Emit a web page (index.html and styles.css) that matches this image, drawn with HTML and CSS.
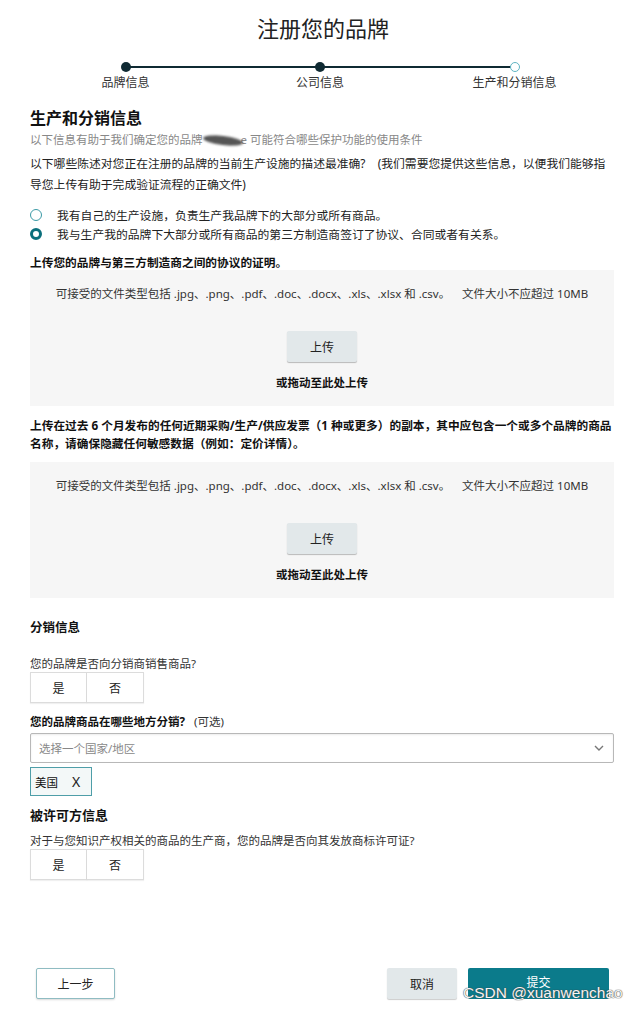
FILE: index.html
```html
<!DOCTYPE html>
<html lang="zh-CN">
<head>
  <meta charset="UTF-8" />
  <meta name="viewport" content="width=device-width, initial-scale=1.0"/>
  <title>注册您的品牌</title>
  <link rel="stylesheet" href="styles.css">
</head>
<body>
  <div class="page">
    <h1 class="title">注册您的品牌</h1>

    <div class="stepper">
      <div class="step done"><span class="dot"></span><span class="step-label">品牌信息</span></div>
      <div class="step done"><span class="dot"></span><span class="step-label">公司信息</span></div>
      <div class="step current"><span class="dot"></span><span class="step-label">生产和分销信息</span></div>
    </div>

    <div class="content">
      <h2 class="section-title">生产和分销信息</h2>
      <p class="subtitle">以下信息有助于我们确定您的品牌<span class="redact"></span>e 可能符合哪些保护功能的使用条件</p>

      <p class="question">以下哪些陈述对您正在注册的品牌的当前生产设施的描述最准确?&nbsp;&nbsp;&nbsp; (我们需要您提供这些信息，以便我们能够指导您上传有助于完成验证流程的正确文件)</p>

      <div class="radios">
        <label class="radio"><span class="circle"></span>我有自己的生产设施，负责生产我品牌下的大部分或所有商品。</label>
        <label class="radio checked"><span class="circle"></span>我与生产我的品牌下大部分或所有商品的第三方制造商签订了协议、合同或者有关系。</label>
      </div>

      <p class="field-label first">上传您的品牌与第三方制造商之间的协议的证明。</p>
      <div class="upload">
        <p class="upload-note">可接受的文件类型包括 .jpg、.png、.pdf、.doc、.docx、.xls、.xlsx 和 .csv。&nbsp;&nbsp;&nbsp; 文件大小不应超过 10MB</p>
        <button class="upload-btn">上传</button>
        <p class="drop">或拖动至此处上传</p>
      </div>

      <p class="field-label second">上传在过去 6 个月发布的任何近期采购/生产/供应发票（1 种或更多）的副本，其中应包含一个或多个品牌的商品名称，请确保隐藏任何敏感数据（例如：定价详情）。</p>
      <div class="upload">
        <p class="upload-note">可接受的文件类型包括 .jpg、.png、.pdf、.doc、.docx、.xls、.xlsx 和 .csv。&nbsp;&nbsp;&nbsp; 文件大小不应超过 10MB</p>
        <button class="upload-btn">上传</button>
        <p class="drop">或拖动至此处上传</p>
      </div>

      <h3 class="group-title dist">分销信息</h3>
      <p class="ask dist-ask">您的品牌是否向分销商销售商品?</p>
      <div class="yesno">
        <button>是</button>
        <button>否</button>
      </div>

      <p class="ask where"><b>您的品牌商品在哪些地方分销?</b>&nbsp;&nbsp; (可选)</p>
      <div class="select">
        <span>选择一个国家/地区</span>
        <svg class="chevron" width="10" height="6" viewBox="0 0 10 6"><path d="M1 1l4 4 4-4" fill="none" stroke="#777" stroke-width="1.4"/></svg>
      </div>
      <div class="chips">
        <span class="chip">美国 <span class="chip-x">X</span></span>
      </div>

      <h3 class="group-title licence">被许可方信息</h3>
      <p class="ask lic-ask">对于与您知识产权相关的商品的生产商，您的品牌是否向其发放商标许可证?</p>
      <div class="yesno">
        <button>是</button>
        <button>否</button>
      </div>
    </div>

    <div class="footer">
      <button class="btn-back">上一步</button>
      <div class="footer-right">
        <button class="btn-cancel">取消</button>
        <button class="btn-submit">提交</button>
      </div>
    </div>

    <div class="watermark">CSDN @xuanwenchao</div>
  </div>
</body>
</html>
```

FILE: styles.css
```css
body {
  margin: 0;
  font-family: "Noto Sans", "Noto Sans CJK SC", sans-serif;
  font-size: 12px;
  color: #111;
  background-color: #fff;
}

p {
  margin: 0;
}

button {
  font-family: inherit;
  cursor: pointer;
}

.page {
  position: relative;
  width: 640px;
  height: 1010px;
}

.title {
  margin: 0;
  padding: 14px 0 0 6px;
  text-align: center;
  font-size: 22px;
  font-weight: 400;
  line-height: 28px;
  color: #222;
}

/* progress steps */
.stepper {
  position: relative;
  width: 389px;
  margin: 20px auto 0;
  display: flex;
  justify-content: space-between;
}

.stepper::before {
  content: "";
  position: absolute;
  left: 0;
  right: 0;
  top: 4px;
  height: 2px;
  background-color: #0f2a33;
}

.step {
  width: 0;
  display: flex;
  flex-direction: column;
  align-items: center;
}

.dot {
  position: relative;
  flex: none;
  width: 10px;
  height: 10px;
  border-radius: 50%;
  background-color: #0f2a33;
  box-sizing: border-box;
}

.step.current .dot {
  background-color: #fff;
  border: 1.5px solid #5fb4c2;
}

.step-label {
  margin-top: 4px;
  white-space: nowrap;
  font-size: 12px;
  line-height: 14px;
  color: #333;
}

.content {
  padding: 0 26px 0 30px;
}

.section-title {
  margin: 17px 0 0;
  font-size: 16px;
  line-height: 22px;
  font-weight: 700;
  color: #111;
}

.subtitle {
  margin-top: 3px;
  font-size: 11.5px;
  line-height: 16px;
  color: #888;
}

.redact {
  display: inline-block;
  width: 40px;
  height: 9px;
  margin: 0 -2px 0 0;
  vertical-align: middle;
  border-radius: 50%;
  background-color: #555;
  transform: rotate(7deg);
  filter: blur(0.8px);
}

.question {
  margin-top: 5px;
  font-size: 11.8px;
  line-height: 21px;
  color: #222;
}

.radios {
  margin-top: 10px;
  display: flex;
  flex-direction: column;
}

.radio {
  display: flex;
  align-items: center;
  height: 19px;
  font-size: 11.8px;
  color: #222;
}

.circle {
  flex: none;
  width: 12px;
  height: 12px;
  margin-right: 15px;
  border-radius: 50%;
  border: 1.5px solid #3b9aa6;
  box-sizing: border-box;
}

.radio.checked .circle {
  border: 3.5px solid #0b6f7c;
}

.field-label {
  font-size: 11.7px;
  font-weight: 700;
  color: #111;
}

.field-label.first {
  margin-top: 11px;
  line-height: 16px;
}

.field-label.second {
  margin-top: 10px;
  line-height: 18px;
}

.field-label.second + .upload {
  margin-top: 10px;
}

.upload {
  height: 136px;
  box-sizing: border-box;
  padding-top: 16px;
  background-color: #f6f6f6;
  display: flex;
  flex-direction: column;
  align-items: center;
}

.upload-note {
  font-size: 11.5px;
  line-height: 16px;
  color: #333;
}

.upload-btn {
  margin-top: 29px;
  width: 70px;
  height: 31px;
  border: none;
  border-radius: 2px;
  background-color: #e2e8ea;
  box-shadow: 0 1px 1px rgba(0, 0, 0, 0.25);
  font-size: 12px;
  color: #222;
}

.drop {
  margin-top: 13px;
  font-size: 11.5px;
  line-height: 16px;
  font-weight: 700;
  color: #111;
}

.group-title {
  margin: 0;
  font-size: 12.5px;
  line-height: 18px;
  font-weight: 700;
  color: #111;
}

.group-title.dist {
  margin-top: 21px;
}

.group-title.licence {
  margin-top: 10px;
  font-size: 13px;
}

.ask {
  font-size: 11.5px;
  line-height: 16px;
  color: #333;
}

.ask b {
  color: #111;
}

.dist-ask {
  margin-top: 19px;
}

.lic-ask {
  margin-top: 9px;
}

.where {
  margin-top: 11px;
}

.yesno {
  display: flex;
}

.yesno button {
  width: 57px;
  height: 31px;
  border: 1px solid #dcdcdc;
  background-color: #fff;
  box-shadow: 0 1px 1px rgba(0, 0, 0, 0.06);
  font-size: 12px;
  color: #222;
}

.yesno button + button {
  border-left: none;
}

.select {
  margin-top: 3px;
  height: 30px;
  box-sizing: border-box;
  padding: 0 9px 0 8px;
  border: 1px solid #b8b8b8;
  border-radius: 2px;
  box-shadow: inset 0 1px 2px rgba(0, 0, 0, 0.08);
  display: flex;
  align-items: center;
  justify-content: space-between;
  font-size: 11.5px;
  color: #888;
}

.chips {
  margin-top: 4px;
  display: flex;
}

.chip {
  height: 29px;
  box-sizing: border-box;
  padding: 0 11px 0 4px;
  border: 1px solid #4e9ea8;
  background-color: #f3f8f8;
  display: flex;
  align-items: center;
  font-size: 11.5px;
  color: #111;
}

.chip-x {
  margin-left: 14px;
  font-size: 14px;
  color: #222;
}

.footer {
  margin-top: 88px;
  padding: 0 31px 0 36px;
  display: flex;
  justify-content: space-between;
}

.footer button {
  height: 31px;
  border-radius: 2px;
  font-size: 12px;
}

.btn-back {
  width: 79px;
  border: 1px solid #8fbcc2;
  background-color: #fff;
  box-shadow: 0 1px 2px rgba(0, 0, 0, 0.15);
  color: #222;
}

.footer-right {
  display: flex;
  gap: 11px;
}

.btn-cancel {
  width: 70px;
  border: none;
  background-color: #e2e8ea;
  box-shadow: 0 1px 1px rgba(0, 0, 0, 0.2);
  color: #222;
}

.btn-submit {
  width: 141px;
  border: none;
  padding-bottom: 4px;
  background-color: #0b7b8b;
  color: #fff;
}

.watermark {
  position: absolute;
  left: 463px;
  top: 984px;
  font-family: "Liberation Sans", sans-serif;
  font-size: 15.5px;
  color: #f4f4f4;
  text-shadow: 0 0 1px #444, 0 0 1px #444;
}
```
